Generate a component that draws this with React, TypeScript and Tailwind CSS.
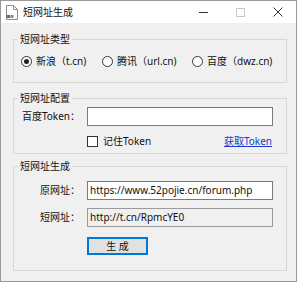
import React from 'react';

const FONT = "font-['Noto_Sans','Noto_Sans_CJK_SC',sans-serif]";

function Group({ title, children, className }: { title: string; children: React.ReactNode; className: string }) {
  return (
    <div className={`relative w-[274px] border border-[#d7d7d7] ${className}`}>
      {/* legend sits on the top border */}
      <span className="absolute -top-[8px] left-[4px] bg-[#f0f0f0] px-[2px] leading-[14px]">{title}</span>
      {children}
    </div>
  );
}

function Radio({ label, checked, width }: { label: string; checked?: boolean; width: string }) {
  return (
    <label className={`flex shrink-0 items-center gap-[4px] whitespace-nowrap ${width}`}>
      <span className="flex h-[11px] w-[11px] items-center justify-center rounded-full border border-[#333] bg-white">
        {checked && <span className="h-[5px] w-[5px] rounded-full bg-[#222]" />}
      </span>
      <span className="leading-[14px]">{label}</span>
    </label>
  );
}

function AppIcon() {
  return (
    <svg width="14" height="15" viewBox="0 0 14 15">
      <path d="M1.5 0.5h7l4 4v10h-11z" fill="#fff" stroke="#8c8c8c" />
      <path d="M8.5 0.5v4h4" fill="none" stroke="#8c8c8c" />
      <rect x="2" y="10" width="3" height="3" fill="#5b6b8c" />
      <rect x="5.5" y="10" width="3" height="3" fill="#7d8aa6" />
    </svg>
  );
}

export default function App() {
  return (
    <div className={`h-[284px] w-[300px] bg-white text-[10px] text-[#111] ${FONT}`}>
      <div className="flex h-[282px] w-[297px] flex-col border border-[#9a9a9a] bg-[#f0f0f0]">
        {/* Title bar */}
        <div className="flex h-[22px] items-center bg-white">
          <div className="ml-[3px] flex h-[15px] w-[15px] items-center justify-center">
            <AppIcon />
          </div>
          <span className="ml-[4px] leading-[14px]">短网址生成</span>
          <div className="ml-auto flex h-full">
            <div className="flex w-[37px] items-center justify-center">
              <span className="h-px w-[9px] bg-[#333]" />
            </div>
            <div className="flex w-[37px] items-center justify-center">
              <span className="h-[9px] w-[9px] border border-[#c8c8c8]" />
            </div>
            <div className="flex w-[37px] items-center justify-center">
              <svg width="10" height="10" viewBox="0 0 10 10">
                <path d="M0.5 0.5l9 9M9.5 0.5l-9 9" stroke="#333" strokeWidth="1" />
              </svg>
            </div>
          </div>
        </div>

        <div className="flex flex-col pl-[12px]">
          {/* Type */}
          <Group title="短网址类型" className="mt-[16px] flex h-[44px] items-center pl-[7px]">
            <Radio label="新浪（t.cn)" checked width="w-[81px]" />
            <Radio label="腾讯（url.cn)" width="w-[90px]" />
            <Radio label="百度（dwz.cn)" width="w-auto" />
          </Group>

          {/* Config */}
          <Group title="短网址配置" className="mt-[15px] h-[56px] pt-[8px] pr-[11px]">
            <div className="flex h-[19px] items-center">
              <span className="mr-[7px] w-[66px] text-right">百度Token：</span>
              <input className="h-[19px] w-[186px] border border-[#7a7a7a] bg-white px-[2px] outline-none" />
            </div>
            <div className="mt-[8px] flex h-[14px] items-center pl-[73px]">
              <span className="h-[11px] w-[11px] border border-[#333] bg-white" />
              <span className="ml-[5px]">记住Token</span>
              <span className="ml-auto mr-[3px] text-[#1a3ccc] underline underline-offset-[1px]">获取Token</span>
            </div>
          </Group>

          {/* Generate */}
          <Group title="短网址生成" className="mt-[12px] h-[105px] pt-[14px]">
            <div className="flex h-[19px] items-center">
              <span className="mr-[7px] w-[66px] text-right">原网址：</span>
              <div className="flex h-[19px] w-[186px] items-center border border-[#7a7a7a] bg-white px-[2px]">
                https://www.52pojie.cn/forum.php
              </div>
            </div>
            <div className="mt-[8px] flex h-[19px] items-center">
              <span className="mr-[7px] w-[66px] text-right">短网址：</span>
              <div className="flex h-[19px] w-[186px] items-center border border-[#9a9a9a] bg-[#f0f0f0] px-[2px]">
                http://t.cn/RpmcYE0
              </div>
            </div>
            <div className="mt-[10px] pl-[73px]">
              <button className="flex h-[18px] w-[61px] items-center justify-center border border-[#0078d7] bg-[#e1e1e1] shadow-[inset_0_0_0_1px_#0078d7]">
                生 成
              </button>
            </div>
          </Group>
        </div>
      </div>
    </div>
  );
}
